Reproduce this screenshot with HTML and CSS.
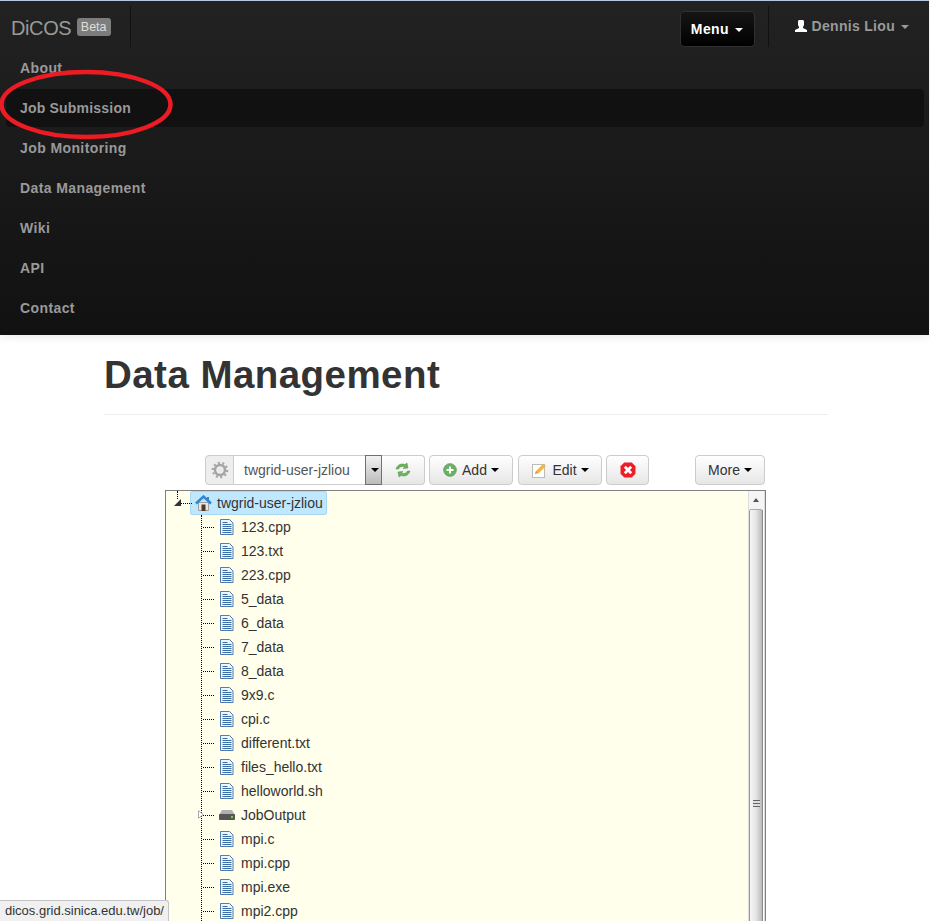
FILE: index.html
```html
<!DOCTYPE html>
<html lang="en">
<head>
<meta charset="utf-8">
<title>Data Management</title>
<link rel="stylesheet" href="styles.css">
</head>
<body>
<nav class="navbar">
  <div class="nav-head">
    <div class="brand"><span class="brand-name">DiCOS</span> <span class="badge">Beta</span></div>
    <div class="nav-right">
      <button class="menu-btn">Menu <i class="caret caret-white"></i></button>
      <div class="user">
        <svg class="user-icon" viewBox="0 0 14 14" width="14" height="14"><path fill="#fff" d="M5 1h4l1 1v4L9 8v1l4 2v2H1v-2l4-2V8L4 6V2z"/></svg>
        <span>Dennis Liou</span> <i class="caret caret-grey"></i>
      </div>
    </div>
  </div>
  <ul class="menu">
    <li>About</li>
    <li class="active">Job Submission</li>
    <li>Job Monitoring</li>
    <li>Data Management</li>
    <li>Wiki</li>
    <li>API</li>
    <li>Contact</li>
  </ul>
</nav>
<svg class="ring" viewBox="0 0 176 76" width="176" height="76"><ellipse cx="86" cy="38.500" rx="84.500" ry="32.500" fill="none" stroke="#ed1c24" stroke-width="4.500"/></svg>

<main class="container">
  <h1>Data Management</h1>
  <div class="rule"></div>
  <div class="toolbar">
    <div class="group">
      <span class="addon">
        <svg viewBox="0 0 18 18" width="18" height="18"><g fill="none" stroke="#a6a6a6"><circle cx="9" cy="9" r="5" stroke-width="2.600"/><circle cx="9" cy="9" r="7.200" stroke-width="2.200" stroke-dasharray="2 2.500"/></g><circle cx="9" cy="9" r="2" fill="#e8e8e8"/></svg>
      </span>
      <span class="select-text">twgrid-user-jzliou</span>
      <span class="select-arrow"><i class="caret caret-black"></i></span>
      <button class="btn btn-refresh">
        <svg viewBox="0 0 18 16" width="18" height="16"><path fill="#6cb35c" stroke="#4f9144" stroke-width=".5" d="M2 7C3 3 7 1 11 2.500L13 1l1 5-5 .5 1.800-1.700C8 3.800 5.500 4.800 4.500 7zM16 9c-1 4-5 6-9 4.500L5 15l-1-5 5-.5-1.800 1.700c2.800 1 5.300 0 6.300-2.200z"/></svg>
      </button>
    </div>
    <button class="btn btn-add">
      <svg viewBox="0 0 14 14" width="14" height="14"><circle cx="7" cy="7" r="6.300" fill="#62b55a" stroke="#7c9a78"/><path stroke="#fff" stroke-width="2" d="M7 3.500v7M3.500 7h7"/></svg>
      Add <i class="caret caret-black"></i>
    </button>
    <button class="btn btn-edit">
      <svg viewBox="0 0 16 16" width="16" height="16"><rect x="1.500" y="2.500" width="12" height="13" fill="#fff" stroke="#bbb"/><path fill="#f0b840" d="M4 12l1-3 7-7 3 2-7 7z"/><path fill="#d9925c" d="M4 12l1-3 2 2z"/></svg>
      Edit <i class="caret caret-black"></i>
    </button>
    <button class="btn btn-del">
      <svg viewBox="0 0 15 15" width="16" height="16"><path fill="#ee1c25" d="M4 .5h7L14.500 4v7L11 14.500H4L.5 11V4z"/><path stroke="#fff" stroke-width="2.600" d="M4.500 4.500l6 6M10.500 4.500l-6 6"/></svg>
    </button>
    <button class="btn btn-more">More <i class="caret caret-black"></i></button>
  </div>

  <div class="tree-box">
    <div class="tree">
      <div class="tree-root">
        <i class="root-line"></i><i class="root-toggle"></i><i class="dots-h root-dots"></i>
        <span class="root-label">
          <svg viewBox="0 0 17 16" width="17" height="16"><path fill="#e9e6e0" stroke="#a0a0a0" d="M3.500 7.500h10v8h-10z"/><path fill="#4d3a2a" d="M6.500 9.500h4V16h-4z"/><path fill="none" stroke="#2f86cf" stroke-width="2.400" d="M1 8.500L8.500 1.500l7.500 7"/><path fill="#2f86cf" d="M12 2h2v4h-2z"/></svg>
          twgrid-user-jzliou
        </span>
      </div>
      <ul class="tree-list">
        <li class="node"><i class="dots-h"></i><svg class="file"><use href="#file"/></svg>123.cpp</li>
        <li class="node"><i class="dots-h"></i><svg class="file"><use href="#file"/></svg>123.txt</li>
        <li class="node"><i class="dots-h"></i><svg class="file"><use href="#file"/></svg>223.cpp</li>
        <li class="node"><i class="dots-h"></i><svg class="file"><use href="#file"/></svg>5_data</li>
        <li class="node"><i class="dots-h"></i><svg class="file"><use href="#file"/></svg>6_data</li>
        <li class="node"><i class="dots-h"></i><svg class="file"><use href="#file"/></svg>7_data</li>
        <li class="node"><i class="dots-h"></i><svg class="file"><use href="#file"/></svg>8_data</li>
        <li class="node"><i class="dots-h"></i><svg class="file"><use href="#file"/></svg>9x9.c</li>
        <li class="node"><i class="dots-h"></i><svg class="file"><use href="#file"/></svg>cpi.c</li>
        <li class="node"><i class="dots-h"></i><svg class="file"><use href="#file"/></svg>different.txt</li>
        <li class="node"><i class="dots-h"></i><svg class="file"><use href="#file"/></svg>files_hello.txt</li>
        <li class="node"><i class="dots-h"></i><svg class="file"><use href="#file"/></svg>helloworld.sh</li>
        <li class="node">
          <svg class="folder-toggle" viewBox="0 0 6 9" width="6" height="9"><path fill="#fff" stroke="#aaa" d="M.5.700L5.200 4.500.5 8.300z"/></svg>
          <i class="dots-h"></i>
          <svg class="drive" viewBox="0 0 16 12"><path fill="#b0b0b0" d="M3 1h10l3 5H0z"/><rect y="5" width="16" height="6" rx="1" fill="#555"/><rect x="12" y="7" width="2" height="2" fill="#7ed321"/></svg>JobOutput</li>
        <li class="node"><i class="dots-h"></i><svg class="file"><use href="#file"/></svg>mpi.c</li>
        <li class="node"><i class="dots-h"></i><svg class="file"><use href="#file"/></svg>mpi.cpp</li>
        <li class="node"><i class="dots-h"></i><svg class="file"><use href="#file"/></svg>mpi.exe</li>
        <li class="node"><i class="dots-h"></i><svg class="file"><use href="#file"/></svg>mpi2.cpp</li>
      </ul>
    </div>
    <div class="scrollbar">
      <div class="scroll-up"></div>
      <div class="thumb"><span class="grip"></span></div>
    </div>
  </div>
</main>

<div class="status">dicos.grid.sinica.edu.tw/job/</div>

<svg class="defs" width="0" height="0">
  <symbol id="file" viewBox="0 0 14 16">
    <path fill="#eef4fb" stroke="#4f7cb0" d="M.5 .5h9l3.500 3.500v11.500H.5z"/>
    <path stroke="#3f6fa8" stroke-width="1.100" d="M2.500 5.500h9M2.500 7.500h9M2.500 9.500h9M2.500 11.500h9M2.500 13.500h9"/>
    <path stroke="#3f6fa8" d="M2.500 3.500h5"/>
  </symbol>
</svg>
</body>
</html>
```

FILE: styles.css
```css
* { box-sizing: border-box; }
html, body { margin: 0; height: 921px; overflow: hidden; }
body {
  background: #fff;
  color: #333;
  font-family: "Liberation Sans", Arial, sans-serif;
  font-size: 14px;
  position: relative;
}
i { display: inline-block; font-style: normal; }
ul { list-style: none; margin: 0; padding: 0; }
button { font-family: inherit; cursor: pointer; }

.navbar {
  height: 335px;
  border-top: 1px solid #b4c8e0;
  background: linear-gradient(#222, #111);
  box-shadow: 0 1px 10px rgba(0, 0, 0, .1);
  margin-right: 1px;
}
.nav-head {
  height: 47px;
  display: flex;
  justify-content: space-between;
  padding: 5px 20px 0 0;
}
.brand {
  width: 131px;
  height: 41px;
  padding: 9px 0 0 11px;
  color: #999;
  font-size: 20px;
  line-height: 26px;
  border-right: 1px solid #111;
  box-shadow: 1px 0 0 #222;
}
.brand-name { letter-spacing: -.4px; }
.badge {
  display: inline-block;
  position: relative;
  top: -4px;
  margin-left: 0;
  padding: 0 4px;
  height: 18px;
  line-height: 18px;
  font-size: 12.500px;
  color: #ddd;
  background: #7d7d7d;
  border-radius: 3px;
}
.nav-right { display: flex; align-items: flex-start; }
.menu-btn {
  width: 75px;
  height: 36px;
  margin: 5px 13px 0 0;
  padding: 0;
  color: #fff;
  font-size: 14px;
  font-weight: bold;
  letter-spacing: .4px;
  background: linear-gradient(#151515, #000);
  border: 1px solid #303030;
  border-radius: 4px;
}
.user {
  height: 41px;
  padding: 12px 0 0 25px;
  color: #999;
  font-weight: bold;
  letter-spacing: .3px;
  line-height: 17px;
  border-left: 1px solid #111;
  display: flex;
  align-items: flex-start;
  gap: 4px;
}
.user-icon { margin-top: 1px; }
.caret {
  width: 0;
  height: 0;
  margin-left: 2px;
  vertical-align: middle;
  border-left: 4.500px solid transparent;
  border-right: 4.500px solid transparent;
  border-top: 4.500px solid #000;
}
.caret-white { border-top-color: #fff; }
.caret-grey { border-top-color: #999; margin: 7px 0 0 2px; }
.caret-black { border-top-color: #000; }

.menu { padding: 0 5px 0 6px; }
.menu li {
  height: 40px;
  padding-left: 14px;
  line-height: 40px;
  color: #999;
  font-weight: bold;
  letter-spacing: .4px;
  border-radius: 4px;
}
.menu li.active { height: 38px; line-height: 38px; margin: 1px 0; background: #111; letter-spacing: .2px; }

.ring { position: absolute; left: 0; top: 66px; }

.container { width: 724px; margin-left: 104px; }
h1 {
  margin: 0;
  padding-top: 19px;
  height: 79px;
  font-size: 38.500px;
  line-height: 42px;
  font-weight: bold;
  letter-spacing: .45px;
  color: #333;
  white-space: nowrap;
}
.rule { height: 1px; background: #eee; }

.toolbar {
  display: flex;
  align-items: flex-start;
  margin: 40px 0 0 101px;
  height: 35px;
  color: #333;
}
.group { display: flex; height: 30px; margin-right: 4px; }
.addon {
  width: 29px;
  display: flex;
  align-items: center;
  justify-content: center;
  background: #eee;
  border: 1px solid #ccc;
  border-radius: 4px 0 0 4px;
}
.select-text {
  width: 131px;
  line-height: 28px;
  padding-left: 10px;
  border-top: 1px solid #ccc;
  border-bottom: 1px solid #ccc;
  color: #555;
}
.select-arrow {
  width: 17px;
  display: flex;
  align-items: center;
  justify-content: center;
  background: linear-gradient(#f2f2f2, #bbb);
  border: 1px solid #707070;
}
.btn {
  height: 30px;
  padding: 0;
  margin-right: 5px;
  font-size: 14px;
  color: #333;
  background: linear-gradient(#fff, #e6e6e6);
  border: 1px solid #ccc;
  border-radius: 4px;
  display: flex;
  align-items: center;
  justify-content: center;
  gap: 5px;
}
.btn .caret { margin-left: -1px; }
.btn-refresh { width: 43px; border-radius: 0 4px 4px 0; margin-right: 0; border-left: 0; }
.btn-add { width: 84px; }
.btn-edit { width: 84px; margin-right: 4px; }
.btn-del { width: 43px; margin-right: 46px; }
.btn-more { width: 70px; margin-right: 0; }

.tree-box {
  margin-left: 61px;
  width: 601px;
  height: 431px;
  display: flex;
  background: #ffffeb;
  border: 1px solid #808080;
  border-bottom: 0;
}
.tree { flex: 1; position: relative; overflow: hidden; }
.tree-root { height: 24px; display: flex; align-items: center; position: relative; padding-left: 24px; }
.root-line { position: absolute; left: 11px; top: 0; height: 8px; border-left: 1px dotted #000; }
.root-toggle {
  position: absolute;
  left: 8px;
  top: 8px;
  width: 0;
  height: 0;
  border-left: 7px solid transparent;
  border-bottom: 7px solid #333;
}
.root-dots { position: absolute; left: 15px; top: 12px; width: 9px; }
.root-label {
  display: flex;
  align-items: center;
  gap: 5px;
  height: 24px;
  padding: 0 3px 0 4px;
  background: #bfe8ff;
  border: 1px solid #a8d8f0;
  border-radius: 2px;
  color: #333;
}
.tree-list {
  margin-left: 35px;
  border-left: 1px dotted #000;
}
.node {
  height: 24px;
  display: flex;
  align-items: center;
  position: relative;
  padding-left: 1px;
  color: #333;
  white-space: nowrap;
}
.dots-h { width: 11px; height: 0; border-top: 1px dotted #000; flex: none; }
.file { width: 14px; height: 16px; margin: 0 7px 0 6px; flex: none; }
.drive { width: 16px; height: 12px; margin: 0 6px 0 5px; flex: none; }
.folder-toggle { position: absolute; left: -4px; top: 7px; }
.scrollbar {
  width: 17px;
  background: #fff;
  border-left: 1px solid #ddd;
  border-right: 1px solid #ddd;
}
.scroll-up { height: 18px; position: relative; background: #f5f5f5; }
.scroll-up::after {
  content: "";
  position: absolute;
  left: 4px;
  top: 7px;
  border-left: 3.500px solid transparent;
  border-right: 3.500px solid transparent;
  border-bottom: 4px solid #555;
}
.thumb {
  height: 412px;
  margin-right: 1px;
  background: linear-gradient(90deg, #f4f4f4, #e8e8e8 45%, #bbb);
  border-left: 1px solid #999;
  border-right: 1px solid #888;
  border-top: 1px solid #aaa;
  border-radius: 2px 2px 0 0;
  padding-top: 290px;
  display: flex;
  justify-content: center;
}
.grip {
  width: 7px;
  height: 7px;
  background: repeating-linear-gradient(#666 0 1px, #ddd 1px 3px);
}
.status {
  position: absolute;
  left: 0;
  bottom: 0;
  width: 169px;
  height: 21px;
  padding-left: 5px;
  font-size: 13px;
  line-height: 19px;
  color: #333;
  background: #f0f0f0;
  border-top: 1px solid #c4c4c4;
  border-right: 1px solid #c4c4c4;
  border-top-right-radius: 3px;
  white-space: nowrap;
}
.defs { position: absolute; }
```
